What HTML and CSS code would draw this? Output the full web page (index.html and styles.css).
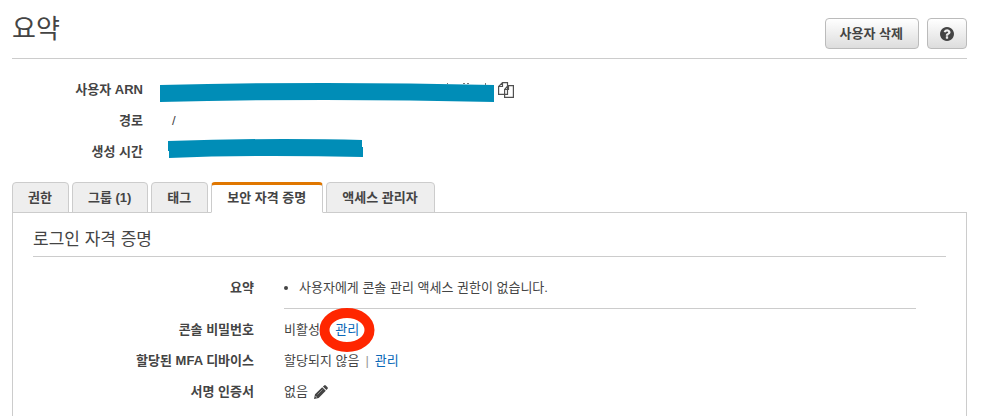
FILE: index.html
```html
<!DOCTYPE html>
<html lang="ko">
<head>
<meta charset="utf-8">
<meta name="viewport" content="width=device-width, initial-scale=1">
<title>요약</title>
<link rel="stylesheet" href="styles.css">
</head>
<body>
<header class="page-header">
  <h1 class="page-title">요약</h1>
  <div class="actions">
    <button class="button" type="button">사용자 삭제</button>
    <button class="button button-help" type="button" aria-label="도움말">
      <svg class="help-icon" viewBox="0 0 1536 1536" aria-hidden="true"><path fill="currentColor" d="M896 1248v-192q0-14-9-23t-23-9H672q-14 0-23 9t-9 23v192q0 14 9 23t23 9h192q14 0 23-9t9-23zm256-672q0-88-55.500-163T958 297t-170-41q-243 0-371 213-15 24 8 42l132 100q7 6 19 6 16 0 25-12 53-68 86-92 34-24 86-24 48 0 85.500 26t37.500 59q0 38-20 61t-68 45q-63 28-115.500 86.500T640 892v36q0 14 9 23t23 9h192q14 0 23-9t9-23q0-19 21.500-49.500T972 829q32-18 49-28.500t46-35 44.500-48 28-60.500 12.500-81zm384 192q0 209-103 385.500T1153.500 1433 768 1536t-385.500-103T103 1153.500 0 768t103-385.500T382.500 103 768 0t385.500 103T1433 382.500 1536 768z"/></svg>
    </button>
  </div>
</header>

<dl class="user-details">
  <dt>사용자 ARN</dt>
  <dd>
    <svg class="mask mask-arn" viewBox="0 0 334 20" aria-hidden="true">
      <path fill="#777" d="M287 1h1v1h-1zM303 1h2v1h-2zM307 1h2v1h-2zM325 1h1v2h-1z"/>
      <path fill="#008db7" d="M0 3Q80 1 165 1Q250 1 334 3V20Q250 18 165 18Q80 18 0 20Z"/>
    </svg>
    <button class="copy" type="button" aria-label="복사">
      <svg class="copy-icon" viewBox="0 0 16 16" aria-hidden="true"><path fill="#fff" stroke="#505050" stroke-width="1.200" d="M4.500 .6H9.500V12.400H.6V4.500ZM4.500 .6V4.500H.6M10 3.600H15.400V15.400H6.600V7.500ZM10.500 3.600V7.500H6.600"/></svg>
    </button>
  </dd>
  <dt>경로</dt>
  <dd class="inset">/</dd>
  <dt>생성 시간</dt>
  <dd>
    <svg class="mask mask-time" viewBox="0 0 195 20" aria-hidden="true"><path fill="#008db7" d="M0 3Q60 1 115 1Q160 1 194 2V9H195V19Q150 18 105 18Q50 18 1 20V13H0Z"/></svg>
  </dd>
</dl>

<nav class="tabs">
  <a class="tab" href="#permissions">권한</a>
  <a class="tab" href="#groups">그룹 (1)</a>
  <a class="tab" href="#tags">태그</a>
  <a class="tab tab-active" href="#credentials" aria-current="page">보안 자격 증명</a>
  <a class="tab" href="#advisor">액세스 관리자</a>
</nav>

<main class="panel" id="credentials">
  <h2 class="section-title">로그인 자격 증명</h2>
  <dl class="credentials">
    <dt>요약</dt>
    <dd class="summary"><ul><li>사용자에게 콘솔 관리 액세스 권한이 없습니다.</li></ul></dd>
    <dt>콘솔 비밀번호</dt>
    <dd>비활성<span class="separator">|</span><span class="circled"><a href="#password">관리</a><svg class="ring" viewBox="0 0 56 46" aria-hidden="true"><ellipse cx="28" cy="23" rx="22.500" ry="17" fill="none" stroke="#ff2600" stroke-width="10"/></svg></span></dd>
    <dt>할당된 MFA 디바이스</dt>
    <dd>할당되지 않음<span class="separator">|</span><a href="#mfa">관리</a></dd>
    <dt>서명 인증서</dt>
    <dd class="certificate">없음
      <button class="edit" type="button" aria-label="편집">
        <svg class="edit-icon" viewBox="0 0 14 14" aria-hidden="true"><path fill="#444" d="M0 14L1 9.200L8.200 2.200L11.800 5.800L4.700 13ZM8.900 1.600L10.200 .4Q11 -.2 11.800 .5L13.500 2.200Q14.200 3 13.600 3.800L12.400 5.100Z"/><path fill="none" stroke="#bbb" stroke-width=".6" d="M3.500 9.500L8.500 4.500"/><path fill="#fff" d="M1.700 11L3 12.300L2.200 12.500L1.500 11.800Z"/></svg>
      </button>
    </dd>
  </dl>
</main>
</body>
</html>
```

FILE: styles.css
```css
* {
  box-sizing: border-box;
}

body {
  display: flex;
  flex-direction: column;
  min-height: 100vh;
  margin: 0;
  padding: 0 17px 0 12px;
  background: #fff;
  color: #444;
  font: 13px/31px "Liberation Sans", "Noto Sans CJK KR", sans-serif;
}

h1,
h2,
dl,
dd,
ul {
  margin: 0;
  padding: 0;
  font-weight: normal;
}

a {
  color: #0a68b8;
  text-decoration: none;
}

dt {
  font-weight: bold;
  text-align: right;
}

button {
  font: inherit;
  color: inherit;
}

.page-header {
  display: flex;
  justify-content: space-between;
  height: 59px;
  border-bottom: 1px solid #ccc;
}

.page-title {
  font-size: 26px;
  line-height: 58px;
}

.actions {
  display: flex;
  gap: 8px;
  padding-top: 18px;
}

.button {
  display: flex;
  align-items: center;
  justify-content: center;
  height: 31px;
  padding: 0 15px 0 14px;
  border: 1px solid #bbb;
  border-radius: 4px;
  background: linear-gradient(#fff, #ddd);
  font-weight: bold;
}

.button-help {
  width: 40px;
  padding: 0;
}

.help-icon {
  width: 14px;
  height: 14px;
}

.user-details {
  display: grid;
  grid-template-columns: 131px 1fr;
  grid-auto-rows: 31px;
  column-gap: 17px;
  padding: 15px 0;
}

.user-details dd {
  display: flex;
  align-items: center;
}

.user-details .inset {
  padding-left: 12px;
}

.mask {
  flex: none;
  height: 20px;
}

.mask-arn {
  width: 334px;
  margin-top: 5px;
}

.mask-time {
  width: 195px;
  margin: 0 0 8px 8px;
}

.copy,
.edit {
  display: inline-flex;
  padding: 0;
  border: 0;
  background: none;
}

.copy {
  margin-left: 4px;
}

.copy-icon {
  width: 16px;
  height: 16px;
}

.tabs {
  display: flex;
  gap: 3px;
  margin-bottom: -1px;
}

.tab {
  height: 31px;
  padding: 0 16px 0 15px;
  border: 1px solid #ccc;
  border-radius: 4px 4px 0 0;
  background: #eee;
  color: #444;
  font-weight: bold;
  line-height: 30px;
}

.tab-active {
  position: relative;
  border-top: 3px solid #e07700;
  border-bottom-color: #fff;
  background: #fff;
  line-height: 26px;
}

.panel {
  flex: 1;
  padding: 11px 20px 0;
  border: 1px solid #ccc;
  border-bottom: 0;
}

.section-title {
  height: 33px;
  border-bottom: 1px solid #ccc;
  font-size: 17px;
  line-height: 32px;
}

.credentials {
  display: grid;
  grid-template-columns: 221px 1fr;
  column-gap: 30px;
  padding: 15px 30px 0 0;
}

.summary {
  height: 37px;
  margin-bottom: 5px;
  border-bottom: 1px solid #ccc;
}

.summary ul {
  padding-left: 15px;
}

.separator {
  padding: 0 6px;
  color: #999;
}

.circled {
  position: relative;
}

.ring {
  position: absolute;
  top: 50%;
  left: 50%;
  width: 56px;
  height: 46px;
  transform: translate(-50%, -50%);
  pointer-events: none;
}

.certificate {
  display: flex;
  align-items: center;
  gap: 6px;
}

.edit-icon {
  width: 14px;
  height: 14px;
}
```
